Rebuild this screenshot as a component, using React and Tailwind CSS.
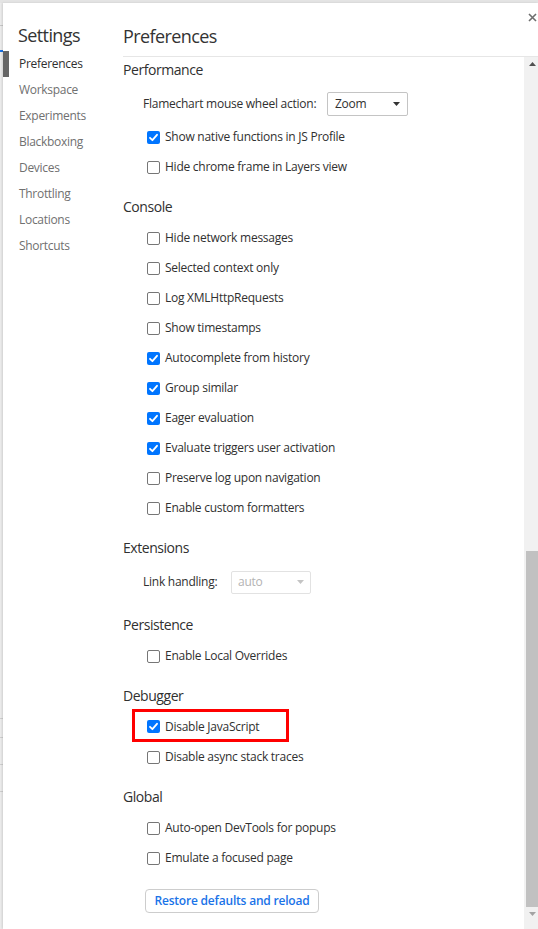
import React from "react";

const FONT = { fontFamily: '"Segoe UI", "Open Sans", "Noto Sans", sans-serif' };

function Checkbox({ checked }) {
  return checked ? (
    <span className="w-[13px] h-[13px] rounded-[2px] bg-[#0075ff] flex items-center justify-center shrink-0">
      <svg width="11" height="11" viewBox="0 0 11 11">
        <path d="M2 5.8 L4.4 8.2 L9 2.8" fill="none" stroke="#fff" strokeWidth="1.8" strokeLinecap="round" strokeLinejoin="round" />
      </svg>
    </span>
  ) : (
    <span className="w-[13px] h-[13px] rounded-[2px] border border-[#767676] bg-white shrink-0" />
  );
}

function CheckRow({ label, checked }) {
  return (
    <div className="h-[30px] flex items-center pl-[24px] gap-[5px] text-[12px] tracking-[-0.25px] text-[#303030]">
      <Checkbox checked={checked} />
      <span>{label}</span>
    </div>
  );
}

function Section({ title, children, mt }) {
  return (
    <div className={mt}>
      <div className="h-[32px] pb-[2px] flex items-center text-[14px] tracking-[-0.45px] text-[#303030]">{title}</div>
      {children}
    </div>
  );
}

function Arrow({ color }) {
  return (
    <svg width="7" height="4" viewBox="0 0 7 4">
      <path d="M0 0 L7 0 L3.5 4 Z" fill={color} />
    </svg>
  );
}

export default function App() {
  const sidebar = [
    "Preferences",
    "Workspace",
    "Experiments",
    "Blackboxing",
    "Devices",
    "Throttling",
    "Locations",
    "Shortcuts",
  ];
  return (
    <div className="w-[538px] h-[929px] overflow-hidden flex flex-col bg-[#f3f3f3]" style={FONT}>
      <div className="h-[3px] bg-[#e4e4e4] shrink-0" />
      <div className="flex flex-1 min-h-0">
        {/* left strip behind dialog */}
        <div className="w-[3px] shrink-0 flex flex-col bg-[#ececec]">
          <div className="h-[22px]" />
          <div className="h-px bg-[#c8c8c8]" />
          <div className="h-[24px]" />
          <div className="h-[2px] bg-[#1a73e8]" />
          <div className="h-[666px]" />
          <div className="h-px bg-[#cfcfcf]" />
          <div className="h-[18px]" />
          <div className="h-px bg-[#cfcfcf]" />
          <div className="h-[26px]" />
          <div className="h-px bg-[#cfcfcf]" />
          <div className="h-[26px]" />
          <div className="h-px bg-[#cfcfcf]" />
        </div>
        {/* dialog */}
        <div className="flex-1 flex bg-white relative shadow-[-1px_0_2px_rgba(0,0,0,0.12)]">
          <div className="absolute right-[1px] top-[10px]">
            <svg width="9" height="9" viewBox="0 0 9 9">
              <path d="M1 1 L8 8 M8 1 L1 8" stroke="#6e6e6e" strokeWidth="1.6" />
            </svg>
          </div>
          {/* sidebar */}
          <div className="w-[120px] shrink-0 flex flex-col">
            <div className="h-[48px] pl-[15px] pt-[20px] text-[18px] leading-[24px] tracking-[-0.6px] text-[#333]">Settings</div>
            {sidebar.map((s, i) => (
              <div key={s} className="h-[26px] flex items-center">
                <span className={i === 0 ? "w-[6px] h-[26px] bg-[#666]" : "w-[6px] h-[26px]"} />
                <span className={"pl-[10px] text-[12px] tracking-[-0.3px] " + (i === 0 ? "text-[#303030]" : "text-[#707070]")}>{s}</span>
              </div>
            ))}
          </div>
          {/* main */}
          <div className="flex-1 flex flex-col min-w-0">
            <div className="h-[54px] shrink-0 border-b border-[#e6e6e6] pt-[21px] text-[18px] leading-[24px] tracking-[-0.6px] text-[#333]">
              Preferences
            </div>
            <div className="flex-1 flex min-h-0">
              <div className="flex-1 flex flex-col -mt-[3px]">
                <Section title="Performance" mt="">
                  <div className="h-[36px] flex items-center pl-[20px] text-[12px] tracking-[-0.25px] text-[#303030]">
                    <span className="w-[184px]">Flamechart mouse wheel action:</span>
                    <div className="w-[81px] h-[24px] border border-[#c4c4c4] rounded-[2px] flex items-center justify-between px-[7px]">
                      <span className="text-[12px] text-[#303030]">Zoom</span>
                      <Arrow color="#333" />
                    </div>
                  </div>
                  <CheckRow label="Show native functions in JS Profile" checked />
                  <CheckRow label="Hide chrome frame in Layers view" />
                </Section>
                <Section title="Console" mt="mt-[9px]">
                  <CheckRow label="Hide network messages" />
                  <CheckRow label="Selected context only" />
                  <CheckRow label="Log XMLHttpRequests" />
                  <CheckRow label="Show timestamps" />
                  <CheckRow label="Autocomplete from history" checked />
                  <CheckRow label="Group similar" checked />
                  <CheckRow label="Eager evaluation" checked />
                  <CheckRow label="Evaluate triggers user activation" checked />
                  <CheckRow label="Preserve log upon navigation" />
                  <CheckRow label="Enable custom formatters" />
                </Section>
                <Section title="Extensions" mt="mt-[9px]">
                  <div className="h-[38px] pb-[2px] flex items-center pl-[20px] text-[12px] tracking-[-0.25px] text-[#303030]">
                    <span className="w-[88px]">Link handling:</span>
                    <div className="w-[80px] h-[23px] border border-[#e2e2e2] rounded-[2px] flex items-center justify-between px-[6px]">
                      <span className="text-[12px] text-[#b3b3b3]">auto</span>
                      <Arrow color="#c4c4c4" />
                    </div>
                  </div>
                </Section>
                <Section title="Persistence" mt="mt-[7px]">
                  <CheckRow label="Enable Local Overrides" />
                </Section>
                <Section title="Debugger" mt="mt-[9px]">
                  <div className="-mt-[3px] ml-[9px] w-[157px] h-[33px] border-[3px] border-[#ff0000] flex items-center pt-[2px] pl-[12px] gap-[5px] text-[12px] tracking-[-0.25px] text-[#303030]">
                    <Checkbox checked />
                    <span>Disable JavaScript</span>
                  </div>
                  <CheckRow label="Disable async stack traces" />
                </Section>
                <Section title="Global" mt="mt-[9px]">
                  <CheckRow label="Auto-open DevTools for popups" />
                  <CheckRow label="Emulate a focused page" />
                </Section>
                <div className="pl-[22px] pt-[14px]">
                  <button className="w-[174px] h-[24px] border border-[#cdcdcd] rounded-[4px] bg-white text-[12px] font-semibold tracking-[-0.2px] text-[#1a73e8]">
                    Restore defaults and reload
                  </button>
                </div>
              </div>
              {/* scrollbar */}
              <div className="w-[14px] shrink-0 bg-[#f1f1f1] flex flex-col items-stretch">
                <div className="h-[14px] flex items-center justify-center pl-[2px]">
                  <svg width="7" height="4" viewBox="0 0 7 4">
                    <path d="M0 4 L7 4 L3.5 0 Z" fill="#505050" />
                  </svg>
                </div>
                <div className="h-[480px]" />
                <div className="h-[356px] ml-[2px] bg-[#c1c1c1]" />
                <div className="h-[14px] flex items-center justify-center pl-[2px]">
                  <svg width="7" height="4" viewBox="0 0 7 4">
                    <path d="M0 0 L7 0 L3.5 4 Z" fill="#a3a3a3" />
                  </svg>
                </div>
              </div>
            </div>
          </div>
        </div>
      </div>
    </div>
  );
}
